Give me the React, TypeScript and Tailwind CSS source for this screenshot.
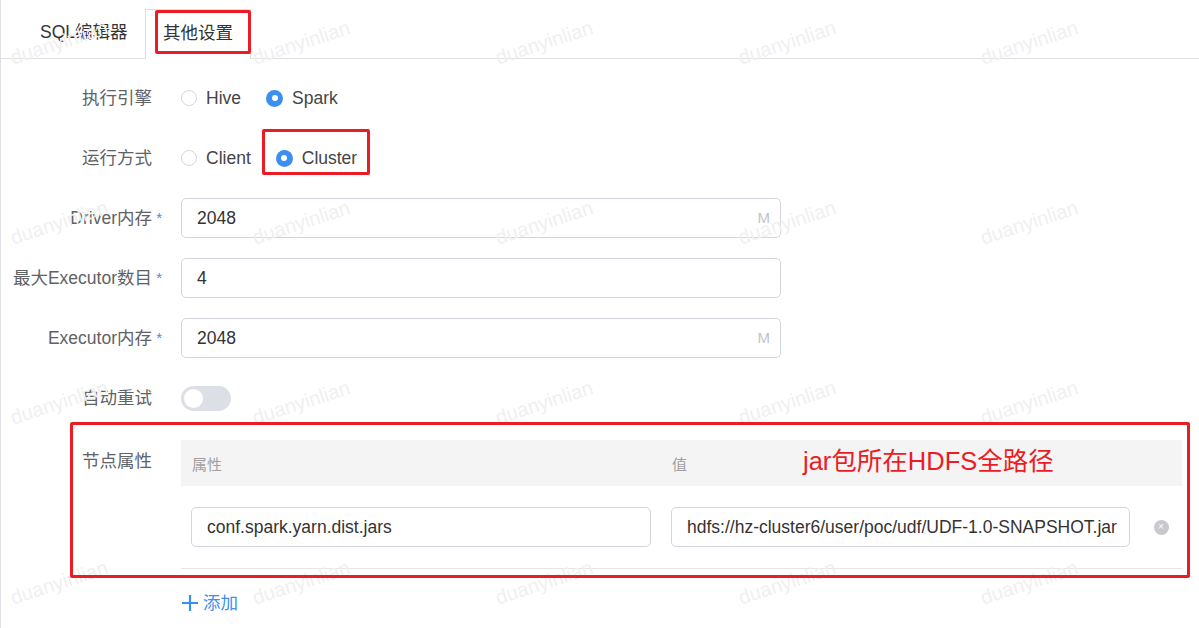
import React from "react";

const FONT = { fontFamily: '"Liberation Sans", Arial, "Noto Sans CJK SC", sans-serif' };

const WM_COLS = [10, 252, 495, 738, 980];
const WM_ROWS = [48, 228, 408, 588];

function Watermarks() {
	return (
		<div className="pointer-events-none absolute inset-0 overflow-hidden">
			{WM_ROWS.map((top) =>
				WM_COLS.map((left) => (
					<span
						key={`${top}-${left}`}
						className="absolute origin-left -rotate-[18deg] text-[20px] leading-none text-[#f0f0f0]"
						style={{ left, top }}
					>
						duanyinlian
					</span>
				)),
			)}
		</div>
	);
}

function Radio({ label, checked }: { label: string; checked?: boolean }) {
	return (
		<label className="mr-[25px] flex items-center">
			{checked ? (
				<span className="flex h-[17px] w-[17px] items-center justify-center rounded-full bg-[#3b8ff0]">
					<span className="h-[6px] w-[6px] rounded-full bg-white" />
				</span>
			) : (
				<span className="h-[16px] w-[16px] rounded-full border border-[#d4d7de] bg-white" />
			)}
			<span className="ml-[9px] text-[17.5px] text-[#454545]">{label}</span>
		</label>
	);
}

function FormLabel({ text, required }: { text: string; required?: boolean }) {
	return (
		<div className="flex w-[180px] shrink-0 items-center justify-end pr-[19px] text-[17.5px] text-[#606266]">
			<span>{text}</span>
			<span className="w-[10px] text-right text-[15px] text-[#3b8ff0]">{required ? "*" : ""}</span>
		</div>
	);
}

function TextInput({ value, suffix, className = "w-[600px]" }: { value: string; suffix?: string; className?: string }) {
	return (
		<div className={`flex h-10 items-center rounded-[5px] border border-[#d3d6dc] bg-white pl-[15px] pr-[10px] ${className}`}>
			<span className="flex-1 overflow-hidden whitespace-nowrap text-[17.5px] text-[#333]">{value}</span>
			{suffix && <span className="text-[15px] text-[#c0c4cc]">{suffix}</span>}
		</div>
	);
}

export default function App() {
	return (
		<div className="relative h-[628px] w-[1199px] overflow-hidden border-l border-[#dcdfe6] bg-white" style={FONT}>
			{/* tabs */}
			<div className="flex h-[59px] items-end border-b border-[#dcdfe6] pl-[19px]">
				<div className="flex h-[49px] w-[125px] items-center pb-[2px] pl-[20px] text-[17.5px] text-[#333]">SQL编辑器</div>
				<div className="relative -mb-px flex h-[50px] w-[106px] items-center justify-center border border-b-0 border-[#dcdfe6] bg-white pb-[3px] text-[17.5px] text-[#333]">
					其他设置
				</div>
			</div>

			{/* form */}
			<div className="flex flex-col pt-[19px]">
				<div className="mb-5 flex h-10 items-center">
					<FormLabel text="执行引擎" />
					<div className="flex items-center">
						<Radio label="Hive" />
						<Radio label="Spark" checked />
					</div>
				</div>
				<div className="mb-5 flex h-10 items-center">
					<FormLabel text="运行方式" />
					<div className="flex items-center">
						<Radio label="Client" />
						<Radio label="Cluster" checked />
					</div>
				</div>
				<div className="mb-5 flex h-10 items-center">
					<FormLabel text="Driver内存" required />
					<TextInput value="2048" suffix="M" />
				</div>
				<div className="mb-5 flex h-10 items-center">
					<FormLabel text="最大Executor数目" required />
					<TextInput value="4" />
				</div>
				<div className="mb-5 flex h-10 items-center">
					<FormLabel text="Executor内存" required />
					<TextInput value="2048" suffix="M" />
				</div>
				<div className="mb-[22px] flex h-10 items-center">
					<FormLabel text="自动重试" />
					<div className="flex h-[25px] w-[50px] items-center rounded-full bg-[#dcdfe6] px-[3px]">
						<span className="h-[19px] w-[19px] rounded-full bg-white" />
					</div>
				</div>
				<div className="flex">
					<div className="flex w-[180px] shrink-0 justify-end pt-[8px] pr-[29px] text-[17.5px] text-[#606266]">节点属性</div>
					<div className="flex w-[1001px] flex-col">
						<div className="flex h-[46px] items-center bg-[#f4f4f4] pt-[4px] text-[15px] text-[#a0a0a0]">
							<div className="w-[480px] pl-[11px]">属性</div>
							<div className="w-[479px] pl-[11px]">值</div>
						</div>
						<div className="flex items-center border-b border-[#e4e6ea] py-[21px]">
							<div className="w-[480px] px-[10px]">
								<TextInput value="conf.spark.yarn.dist.jars" className="w-[460px]" />
							</div>
							<div className="w-[479px] px-[10px]">
								<TextInput value="hdfs://hz-cluster6/user/poc/udf/UDF-1.0-SNAPSHOT.jar" className="w-[459px]" />
							</div>
							<div className="flex flex-1 justify-center">
								<span className="flex h-[15px] w-[15px] items-center justify-center rounded-full bg-[#c8c9cc] text-[10px] leading-none text-white">
									×
								</span>
							</div>
						</div>
						<div className="mt-[21px] flex items-center text-[17.5px] text-[#3b8ff0]">
							<svg width="20" height="20" viewBox="0 0 20 20" className="-ml-px">
								<path d="M10 2v16M2 10h16" stroke="#3b8ff0" strokeWidth="2.2" />
							</svg>
							<span className="ml-[3px]">添加</span>
						</div>
					</div>
				</div>
			</div>

			<Watermarks />

			{/* annotations */}
			<div className="pointer-events-none absolute left-[154px] top-[10px] h-[44px] w-[96px] rounded-[2px] border-[3px] border-[#ec1c24]" />
			<div className="pointer-events-none absolute left-[261px] top-[129px] h-[46px] w-[108px] rounded-[2px] border-[3px] border-[#ec1c24]" />
			<div className="pointer-events-none absolute left-[69px] top-[422px] h-[156px] w-[1120px] rounded-[2px] border-[3px] border-[#ec1c24]" />
			<div className="pointer-events-none absolute left-[802px] top-[449px] text-[25.5px] leading-none text-[#ec1c24]">jar包所在HDFS全路径</div>
		</div>
	);
}
